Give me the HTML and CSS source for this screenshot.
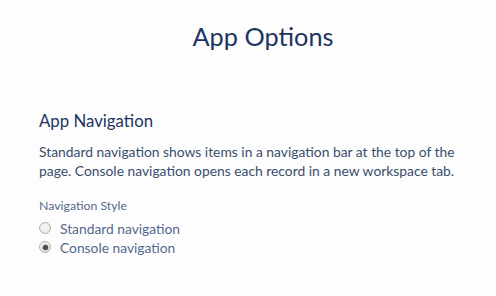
FILE: index.html
```html
<!DOCTYPE html>
<html>
<head>
<meta charset="utf-8">
<link rel="stylesheet" href="styles.css">
</head>
<body>
<div class="page">
  <h1 class="title">App Options</h1>
  <section class="section">
    <h2 class="section-title">App Navigation</h2>
    <p class="desc">Standard navigation shows items in a navigation bar at the top of the page. Console navigation opens each record in a new workspace tab.</p>
    <fieldset class="field">
      <legend class="field-label">Navigation Style</legend>
      <label class="radio-row first"><span class="radio"></span><span class="radio-text">Standard navigation</span></label>
      <label class="radio-row"><span class="radio checked"></span><span class="radio-text">Console navigation</span></label>
    </fieldset>
  </section>
</div>
</body>
</html>
```
FILE: styles.css
```css
html, body {
  margin: 0;
  padding: 0;
  background: #fdfdfd;
}
body {
  font-family: Lato, "Liberation Sans", sans-serif;
  color: #16325c;
  width: 496px;
  height: 296px;
  overflow: hidden;
}
.page {
  display: flex;
  flex-direction: column;
}
.title {
  margin: 20px 0 0;
  padding-left: 30px;
  font-size: 25.3px;
  line-height: 32px;
  font-weight: 400;
  text-align: center;
  color: #1c3461;
}
.section {
  padding: 57px 20px 0 39px;
  display: flex;
  flex-direction: column;
}
.section-title {
  margin: 0;
  font-size: 16.8px;
  line-height: 24px;
  font-weight: 400;
  color: #1c3461;
}
.desc {
  margin: 8.5px 0 0;
  font-size: 13.85px;
  line-height: 19.5px;
  color: #3a4d6e;
}
.field {
  margin: 17px 0 0;
  padding: 0;
  border: 0;
  display: flex;
  flex-direction: column;
}
.field-label {
  padding: 0;
  font-size: 12.3px;
  line-height: 16px;
  color: #54698d;
}
.radio-row {
  display: flex;
  align-items: center;
  gap: 9px;
  height: 19px;
}
.radio-row.first {
  margin-top: 5px;
}
.radio {
  box-sizing: border-box;
  width: 12px;
  height: 12px;
  border-radius: 50%;
  border: 1px solid #b2b2b2;
  background: radial-gradient(circle at 50% 40%, #f6f6f6 0%, #e9e9e9 75%, #dedede 100%);
  display: flex;
  align-items: center;
  justify-content: center;
}
.radio.checked::after {
  content: "";
  width: 5px;
  height: 5px;
  border-radius: 50%;
  background: #4a4a4a;
  box-shadow: 0 0 1px 0.5px #9a9a9a;
}
.radio-text {
  font-size: 13.8px;
  color: #54698d;
}
```
